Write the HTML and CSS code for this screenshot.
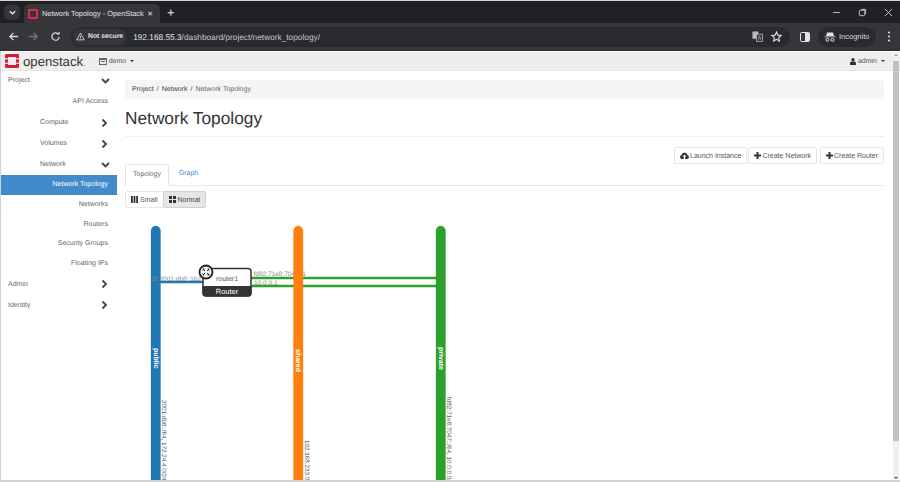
FILE: index.html
```html
<!DOCTYPE html>
<html lang="en">
<head>
    <meta charset="UTF-8">
    <title>Network Topology - OpenStack Dashboard</title>
    <link rel="stylesheet" href="styles.css">
</head>
<body>
<div class="window">
    <!-- Browser chrome -->
    <div class="tabstrip">
        <div class="tab-search">
            <svg width="9" height="9" viewBox="0 0 10 10"><path d="M2 3.5 5 6.5 8 3.5" fill="none" stroke="#e3e3e3" stroke-width="1.5"/></svg>
        </div>
        <div class="tab">
            <svg class="favicon" width="10" height="10" viewBox="0 0 10 10"><rect width="10" height="10" rx="1.2" fill="#e8254a"/><rect x="2" y="2" width="6" height="6" fill="#35363a"/></svg>
            <span class="tab-title">Network Topology - OpenStack</span>
            <span class="tab-close">&#10005;</span>
        </div>
        <span class="new-tab">+</span>
        <div class="win-controls">
            <svg width="9" height="9" viewBox="0 0 10 10"><path d="M1 5H9" stroke="#c8c8c8" stroke-width="1"/></svg>
            <svg width="9" height="9" viewBox="0 0 10 10"><rect x="1.5" y="2.5" width="6" height="6" rx="1" fill="none" stroke="#d0d0d0"/><path d="M3.5 1.5H8.5V6.5" fill="none" stroke="#d0d0d0"/></svg>
            <svg width="9" height="9" viewBox="0 0 10 10"><path d="M1 1 9 9M9 1 1 9" stroke="#d0d0d0"/></svg>
        </div>
    </div>
    <div class="toolbar">
        <svg class="nav-icon" width="11" height="11" viewBox="0 0 12 12"><path d="M11 6H2M6 2 2 6l4 4" fill="none" stroke="#dcdcdc" stroke-width="1.4"/></svg>
        <svg class="nav-icon forward" width="11" height="11" viewBox="0 0 12 12"><path d="M1 6H10M6 2l4 4-4 4" fill="none" stroke="#77787a" stroke-width="1.4"/></svg>
        <svg class="nav-icon" width="11" height="11" viewBox="0 0 12 12"><path d="M10 6.5A4 4 0 1 1 8.8 3.2" fill="none" stroke="#dcdcdc" stroke-width="1.3"/><path d="M7 3.8H10.5V.5Z" fill="#dcdcdc"/></svg>
        <div class="omnibox">
            <div class="security">
                <svg width="9" height="9" viewBox="0 0 12 12"><path d="M6 1.5 11 10.5H1Z M6 5V8M6 8.8V9.8" fill="none" stroke="#e3e3e3" stroke-width="1.1"/></svg>
                <span>Not secure</span>
            </div>
            <span class="url">192.168.55.3<span class="url-path">/dashboard/project/network_topology/</span></span>
            <svg class="omni-icon translate" width="11" height="11" viewBox="0 0 12 12"><rect x=".5" y=".5" width="6.5" height="8" fill="#bbb"/><rect x="5" y="3.5" width="6.5" height="8" fill="#35363a" stroke="#bbb" stroke-width=".8"/><path d="M7 9.500 8.200 5.500 9.500 9.500" fill="none" stroke="#bbb" stroke-width=".7"/></svg>
            <svg class="omni-icon" width="11" height="11" viewBox="0 0 12 12"><path d="M6 1 7.5 4.5 11 4.9 8.4 7.3 9.1 11 6 9.1 2.9 11 3.6 7.3 1 4.9 4.5 4.5Z" fill="none" stroke="#e3e3e3" stroke-width="1.2"/></svg>
        </div>
        <svg class="side-panel" width="10" height="10" viewBox="0 0 10 10"><rect x=".5" y=".5" width="9" height="9" rx="1" fill="none" stroke="#e3e3e3"/><rect x="5" y="1" width="4" height="8" fill="#e3e3e3"/></svg>
        <div class="incognito">
            <svg width="12" height="10" viewBox="0 0 12 10"><path d="M3 .5H9L10 4H2Z M.5 4.5H11.5V5.300H.5Z" fill="#e3e3e3"/><circle cx="3.5" cy="7.8" r="1.5" fill="none" stroke="#e3e3e3"/><circle cx="8.5" cy="7.8" r="1.5" fill="none" stroke="#e3e3e3"/></svg>
            <span>Incognito</span>
        </div>
        <svg class="menu-dots" width="4" height="11" viewBox="0 0 4 11"><circle cx="2" cy="1.5" r="1.1" fill="#d8d8d8"/><circle cx="2" cy="5.5" r="1.1" fill="#d8d8d8"/><circle cx="2" cy="9.5" r="1.1" fill="#d8d8d8"/></svg>
    </div>

    <!-- Dashboard -->
    <div class="page">
        <div class="navbar">
            <svg class="logo" width="14" height="14" viewBox="0 0 14 14">
                <path d="M1.2 0H12.800Q14 0 14 1.200V4.200H11V3H3V4.200H0V1.200Q0 0 1.2 0Z" fill="#da1a32"/>
                <rect y="5.4" width="3" height="3.2" fill="#da1a32"/>
                <rect x="11" y="5.4" width="3" height="3.2" fill="#da1a32"/>
                <path d="M0 9.800H3V11H11V9.800H14V12.800Q14 14 12.800 14H1.200Q0 14 0 12.800Z" fill="#da1a32"/>
            </svg>
            <span class="brand">openstack<span class="brand-dot">.</span></span>
            <span class="project-picker">
                <svg width="8" height="7" viewBox="0 0 8 7"><rect width="8" height="7" fill="#666"/><rect x="1" y="2" width="6" height="4" fill="#eee"/><rect x="2" y="3" width="4" height="1" fill="#666"/></svg>
                demo <i class="caret"></i>
            </span>
            <span class="user-menu">
                <svg width="6" height="7" viewBox="0 0 6 7"><circle cx="3" cy="1.8" r="1.7" fill="#333"/><path d="M0 7V5Q0 3.5 1.5 3.5H4.5Q6 3.5 6 5V7Z" fill="#333"/></svg>
                admin <i class="caret"></i>
            </span>
        </div>

        <div class="content-row">
            <nav class="sidebar">
                <div class="nav-top first"><span>Project</span><svg class="chev" width="9" height="7" viewBox="0 0 9 7"><path d="M1 1.5 4.5 5 8 1.5" fill="none" stroke="#444" stroke-width="1.8"/></svg></div>
                <a class="nav-leaf">API Access</a>
                <div class="nav-group"><span>Compute</span><svg class="chev" width="7" height="9" viewBox="0 0 7 9"><path d="M1.5 1 5 4.5 1.5 8" fill="none" stroke="#444" stroke-width="1.8"/></svg></div>
                <div class="nav-group"><span>Volumes</span><svg class="chev" width="7" height="9" viewBox="0 0 7 9"><path d="M1.5 1 5 4.5 1.5 8" fill="none" stroke="#444" stroke-width="1.8"/></svg></div>
                <div class="nav-group"><span>Network</span><svg class="chev" width="9" height="7" viewBox="0 0 9 7"><path d="M1 1.5 4.5 5 8 1.5" fill="none" stroke="#444" stroke-width="1.8"/></svg></div>
                <a class="nav-leaf active">Network Topology</a>
                <a class="nav-leaf">Networks</a>
                <a class="nav-leaf">Routers</a>
                <a class="nav-leaf">Security Groups</a>
                <a class="nav-leaf">Floating IPs</a>
                <div class="nav-top"><span>Admin</span><svg class="chev" width="7" height="9" viewBox="0 0 7 9"><path d="M1.5 1 5 4.5 1.5 8" fill="none" stroke="#444" stroke-width="1.8"/></svg></div>
                <div class="nav-top"><span>Identity</span><svg class="chev" width="7" height="9" viewBox="0 0 7 9"><path d="M1.5 1 5 4.5 1.5 8" fill="none" stroke="#444" stroke-width="1.8"/></svg></div>
            </nav>

            <main class="main">
                <div class="breadcrumb"><span>Project</span><em>/</em><span>Network</span><em>/</em><span class="crumb-last">Network Topology</span></div>
                <h1>Network Topology</h1>
                <div class="actions">
                    <button type="button"><svg width="9" height="7" viewBox="0 0 9 7"><path d="M2 7Q0 7 0 5 0 3.5 1.5 3.2 2 .5 4.5 .5 7 .5 7.3 3 9 3.3 9 5 9 7 7 7H5.200V4.500H6.400L4.500 2.500 2.600 4.500H3.800V7Z" fill="#333"/></svg> Launch Instance</button>
                    <button type="button"><svg width="7" height="7" viewBox="0 0 7 7"><path d="M2.5 0H4.5V2.5H7V4.5H4.5V7H2.5V4.5H0V2.5H2.5Z" fill="#333"/></svg> Create Network</button>
                    <button type="button"><svg width="7" height="7" viewBox="0 0 7 7"><path d="M2.5 0H4.5V2.5H7V4.5H4.5V7H2.5V4.5H0V2.5H2.5Z" fill="#333"/></svg> Create Router</button>
                </div>
                <div class="tabs">
                    <a class="tab-link selected">Topology</a>
                    <a class="tab-link">Graph</a>
                </div>
                <div class="btn-group">
                    <button type="button"><svg width="7" height="7" viewBox="0 0 7 7"><path d="M0 0H1.800V7H0ZM2.600 0H4.400V7H2.600ZM5.200 0H7V7H5.200Z" fill="#333"/></svg> Small</button>
                    <button type="button" class="pressed"><svg width="7" height="7" viewBox="0 0 7 7"><path d="M0 0H3V3H0ZM4 0H7V3H4ZM0 4H3V7H0ZM4 4H7V7H4Z" fill="#333"/></svg> Normal</button>
                </div>

                <!-- Topology canvas, coordinates are the diagram itself -->
                <svg class="topology" width="350" height="272" viewBox="125 210 350 272">
                    <rect class="bar" x="151" y="226" width="9.5" height="270" rx="4.7" fill="#1f77b4" stroke="#1f77b4"/>
                    <line x1="160" y1="282" x2="204" y2="282" stroke="#1f77b4" stroke-width="2.5"/>
                    <line x1="251" y1="278" x2="440" y2="278" stroke="#2ca02c" stroke-width="2.5"/>
                    <line x1="251" y1="286" x2="440" y2="286" stroke="#2ca02c" stroke-width="2.5"/>
                    <text class="port" x="151" y="280.500">20</text>
                    <text class="port" x="159.500" y="280.500">2001:db8::1b2</text>
                    <text class="port" x="253.500" y="275.500">fd82:71e8:7047::1</text>
                    <text class="port" x="254" y="284.500">10.0.0.1</text>
                    <rect class="bar" x="293.5" y="226" width="9.5" height="270" rx="4.7" fill="#ff7f0e" stroke="#ff7f0e"/>
                    <rect class="bar" x="436" y="226" width="9.5" height="270" rx="4.7" fill="#2ca02c" stroke="#2ca02c"/>

                    <rect x="203" y="268.5" width="48" height="27.5" rx="3" fill="#fff" stroke="#333" stroke-width="1.5"/>
                    <path d="M202.500 286H251.500V293Q251.500 296.500 248 296.500H206Q202.500 296.500 202.500 293Z" fill="#333"/>
                    <text class="router-name" x="227" y="280.500">router1</text>
                    <text class="router-type" x="227" y="294">Router</text>
                    <circle cx="206" cy="272" r="6.5" fill="#fff" stroke="#222" stroke-width="1.8"/>
                    <path d="M203 269 205 271M209 269 207 271M203 275 205 273M209 275 207 273M203 269H204.500M203 269V270.500M209 269H207.500M209 269V270.500M203 275H204.500M203 275V273.500M209 275H207.500M209 275V273.500" stroke="#222" stroke-width="1"/>

                    <text class="net-name" transform="translate(153.5 348) rotate(90)">public</text>
                    <text class="net-name" transform="translate(296 349) rotate(90)">shared</text>
                    <text class="net-name" transform="translate(438.5 347) rotate(90)">private</text>
                    <text class="subnet" transform="translate(162 400) rotate(90)">2001:db8::/64, 172.24.4.0/24</text>
                    <text class="subnet" transform="translate(304.5 440) rotate(90)">192.168.233.0/</text>
                    <text class="subnet" transform="translate(447 397) rotate(90)">fd82:71e8:7047::/64, 10.0.0.0/</text>
                </svg>
            </main>
            <div class="scrollbar">
                <i class="arrow-up"></i>
                <div class="scroll-thumb"></div>
                <i class="arrow-down"></i>
            </div>
        </div>
    </div>
</div>
</body>
</html>
```

FILE: styles.css
```css
* { box-sizing: border-box; }
html, body { margin: 0; height: 100%; overflow: hidden; }
body { font-family: "Liberation Sans", Arial, sans-serif; background: #fff; color: #333; text-rendering: geometricPrecision; }
.window { width: 900px; height: 482px; display: flex; flex-direction: column; padding: 1px 0 2px 1px; background: #d4d4d4; overflow: hidden; }

/* browser chrome */
.tabstrip { height: 22px; flex: none; display: flex; align-items: center; background: #202124; padding-left: 4px; margin-left: -1px; }
.tab-search { width: 16px; height: 15px; background: #35363a; border-radius: 5px; display: flex; align-items: center; justify-content: center; margin-right: 4px; }
.tab { width: 136px; height: 19px; margin-top: 3px; background: #35363a; border-radius: 6px 6px 0 0; display: flex; align-items: center; padding-left: 4px; color: #e3e3e3; font-size: 7.4px; }
.favicon { flex: none; margin-right: 4px; }
.tab-title { flex: 1; white-space: nowrap; }
.tab-close { font-size: 7px; margin-right: 7px; }
.new-tab { color: #e3e3e3; font-size: 13px; margin-left: 7px; }
.win-controls { margin-left: auto; display: flex; gap: 17px; padding-right: 7px; }
.toolbar { height: 28px; flex: none; display: flex; align-items: center; background: #35363a; margin-left: -1px; border-bottom: 1px solid #2c2d30; }
.nav-icon { margin: 0 1px 0 10px; flex: none; }
.nav-icon:first-child { margin-left: 8px; }
.nav-icon.forward { margin-left: 8px; }
.omnibox { width: 719px; height: 20px; margin-left: 9px; flex: none; background: #292a2d; border-radius: 10px; display: flex; align-items: center; }
.security { height: 16px; margin-left: 2px; padding: 0 4px 0 3px; background: #35363a; border-radius: 8px; display: flex; align-items: center; gap: 3px; color: #e3e3e3; font-size: 6.8px; font-weight: bold; }
.url { margin-left: 6px; color: #e8e8e8; font-size: 8.3px; }
.url-path { color: #c4c7c5; }
.omni-icon { flex: none; margin-right: 8px; }
.translate { margin-left: auto; }
.side-panel { flex: none; margin-left: 10px; }
.incognito { width: 58px; height: 20px; margin-left: 8px; flex: none; background: #292a2d; border-radius: 10px; display: flex; align-items: center; gap: 3px; padding-left: 6px; color: #dcdcdc; font-size: 7.5px; }
.menu-dots { margin-left: 11px; flex: none; }

/* dashboard */
.page { flex: 1; min-height: 0; background: #fff; display: flex; flex-direction: column; }
.navbar { height: 20px; flex: none; display: flex; align-items: center; background: #eee; padding: 0 8px 0 4px; border-bottom: 1px solid #e4e4e4; border-top: 1px solid #fff; color: #555; font-size: 7px; }
.logo { flex: none; }
.brand { margin-left: 4px; color: #333; font-size: 13.2px; }
.brand-dot { font-size: 9px; color: #888; }
.project-picker { margin-left: 13px; display: inline-flex; align-items: center; gap: 2px; }
.user-menu { margin-left: auto; margin-right: 7px; display: inline-flex; align-items: center; gap: 2px; }
.caret { display: inline-block; margin-left: 2px; border: 2.5px solid transparent; border-top-color: #333; border-bottom: 0; }

.content-row { flex: 1; min-height: 0; display: flex; }
.sidebar { width: 116px; flex: none; font-size: 7px; color: #666; }
.nav-top, .nav-group { height: 21px; display: flex; align-items: center; position: relative; }
.nav-top { padding-left: 7px; }
.nav-top.first { height: 19px; margin-bottom: 1px; }
.nav-group { padding-left: 39px; }
.chev { position: absolute; left: 100px; top: 50%; transform: translateY(-50%); }
.nav-leaf { display: block; height: 19.8px; line-height: 19.8px; padding-right: 9px; text-align: right; }
.nav-leaf:first-of-type { height: 21px; line-height: 21px; }
.nav-leaf.active { background: #428bca; color: #fff; border: 1px solid #3f86c4; border-width: 1px 0; line-height: 17.8px; }

.main { flex: 1; min-width: 0; padding: 9px 9px 0 8px; display: flex; flex-direction: column; overflow: hidden; position: relative; }
.breadcrumb { height: 19px; flex: none; background: #f5f5f5; border-radius: 2px; padding-left: 7px; display: flex; align-items: center; font-size: 7px; color: #444; }
.breadcrumb em { font-style: normal; margin: 0 3px; }
.crumb-last { color: #666; }
h1 { height: 38px; line-height: 38px; flex: none; margin: 0; font-size: 17.3px; font-weight: normal; color: #333; border-bottom: 1px solid #f0f0f0; }
.actions { display: flex; justify-content: flex-end; margin-top: 10px; flex: none; }
button { height: 17px; padding: 0 5px; font-family: inherit; font-size: 7px; color: #555; background: #fff; border: 1px solid #e6e6e6; border-radius: 2px; display: inline-flex; align-items: center; gap: 1px; }
.actions button + button { margin-left: 1px; }
.actions button:last-child { margin-left: 3px; }
.tabs { height: 22px; flex: none; display: flex; border-bottom: 1px solid #e6e6e6; font-size: 7px; }
.tab-link { width: 44px; height: 22px; line-height: 20px; text-align: center; color: #428bca; }
.tab-link:last-child { width: 39px; }
.tab-link.selected { color: #666; background: #fff; border: 1px solid #e6e6e6; border-bottom-color: #fff; border-radius: 2px 2px 0 0; }
.btn-group { display: flex; margin-top: 5px; flex: none; }
.btn-group button { gap: 2px; }
.btn-group button + button { margin-left: -1px; }
.btn-group .pressed { background: #e6e6e6; border-color: #d0d0d0; color: #444; }
.topology { position: absolute; left: 8px; top: 139px; }
.bar { stroke-opacity: .3; stroke-width: 1; }
.port { font-size: 6.5px; fill: #888; }
.router-name { font-size: 7px; fill: #555; text-anchor: middle; }
.router-type { font-size: 7.5px; fill: #fff; text-anchor: middle; }
.net-name { font-size: 7px; font-weight: bold; fill: #fff; }
.subnet { font-size: 6.3px; fill: #555; }

/* page scrollbar runs up past the navbar */
.scrollbar { width: 6px; flex: none; margin: -19px 1px 0 0; padding-top: 9px; background: #f1f1f1; display: flex; flex-direction: column; position: relative; }
.scroll-thumb { height: 380px; background: #c1c1c1; }
.arrow-up, .arrow-down { position: absolute; left: 1px; border: 2px solid transparent; }
.arrow-up { top: 2px; border-bottom-color: #a0a0a0; border-top: 0; }
.arrow-down { bottom: 1px; border-top-color: #505050; border-bottom: 0; }
```
